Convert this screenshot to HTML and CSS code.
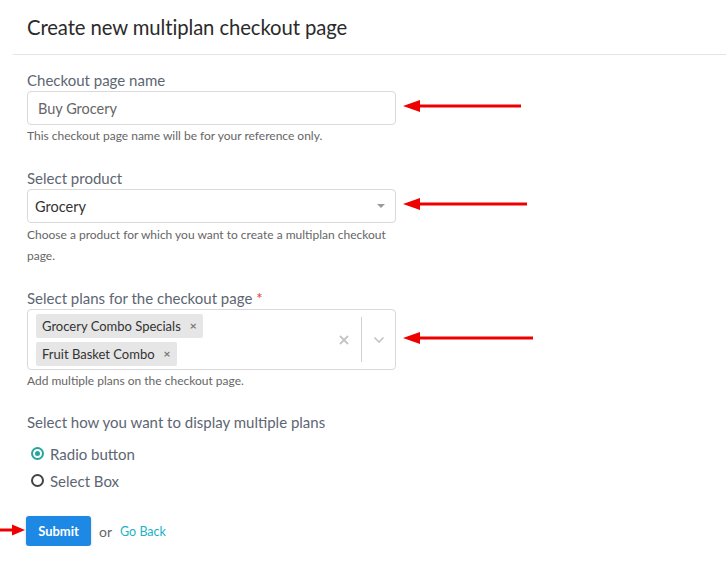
FILE: index.html
```
<!DOCTYPE html>
<html>
<head>
<meta charset="utf-8">
<link rel="stylesheet" href="styles.css">
</head>
<body>
<div class="header"><h1 class="title">Create new multiplan checkout page</h1></div>
<form class="form">
  <div class="field">
    <label class="label">Checkout page name</label>
    <div class="input">Buy Grocery</div>
    <p class="help">This checkout page name will be for your reference only.</p>
    <svg class="arrow a1" width="120" height="14" viewBox="0 0 120 14"><path d="M0 7 L17 1 L17 5.5 L118 5.5 L118 8.5 L17 8.5 L17 13 Z" fill="#ee0000"/></svg>
  </div>
  <div class="field gap-b">
    <label class="label">Select product</label>
    <div class="input select"><span class="val">Grocery</span><span class="caret"></span></div>
    <p class="help tall">Choose a product for which you want to create a multiplan checkout page.</p>
    <svg class="arrow a2" width="126" height="14" viewBox="0 0 126 14"><path d="M0 7 L17 1 L17 5.5 L124 5.5 L124 8.5 L17 8.5 L17 13 Z" fill="#ee0000"/></svg>
  </div>
  <div class="field gap-c">
    <label class="label">Select plans for the checkout page <span class="req">*</span></label>
    <div class="multi">
      <div class="tags">
        <span class="tag">Grocery Combo Specials <span class="tx">×</span></span>
        <span class="tag">Fruit Basket Combo <span class="tx">×</span></span>
      </div>
      <div class="ind clear"><svg width="12" height="12" viewBox="0 0 12 12"><path d="M2 2 L10 10 M10 2 L2 10" stroke="#c4c4c4" stroke-width="1.8"/></svg></div>
      <div class="sep"></div>
      <div class="ind chev"><svg width="12" height="8" viewBox="0 0 12 8"><path d="M1.5 1.5 L6 6 L10.5 1.5" stroke="#c4c4c4" stroke-width="1.6" fill="none"/></svg></div>
    </div>
    <p class="help">Add multiple plans on the checkout page.</p>
    <svg class="arrow a3" width="132" height="14" viewBox="0 0 132 14"><path d="M0 7 L17 1 L17 5.5 L130 5.5 L130 8.5 L17 8.5 L17 13 Z" fill="#ee0000"/></svg>
  </div>
  <div class="field gap-d">
    <label class="label">Select how you want to display multiple plans</label>
    <div class="radios">
      <div class="radio"><span class="dot on"></span>Radio button</div>
      <div class="radio"><span class="dot"></span>Select Box</div>
    </div>
  </div>
  <div class="actions">
    <svg class="arrow a4" width="26" height="12" viewBox="0 0 26 12"><path d="M25 6 L12 0.5 L12 4.5 L0 4.5 L0 7.5 L12 7.5 L12 11.5 Z" fill="#ee0000"/></svg>
    <button type="button" class="btn">Submit</button>
    <span class="or">or</span>
    <a class="back">Go Back</a>
  </div>
</form>
</body>
</html>
```
FILE: styles.css
```
* { box-sizing: border-box; }
body { margin: 0; font-family: Lato, "Open Sans", sans-serif; background: #fff; }
.header { margin-left: 13px; padding: 15px 0 15px 14px; border-bottom: 1px solid #e5e5e5; }
.title { margin: 0; font-size: 20.3px; line-height: 24px; font-weight: 400; color: #2b2b2b; letter-spacing: -0.1px; }
.form { padding: 15px 0 0 27px; display: flex; flex-direction: column; }
.field { position: relative; width: 369px; display: flex; flex-direction: column; }
.gap-b { margin-top: 24px; }
.gap-c { margin-top: 22px; }
.gap-d { margin-top: 23px; }
.label { font-size: 15px; line-height: 20px; color: #5d6672; margin-bottom: 1px; }
.req { color: #e53935; }
.input { height: 34px; border: 1px solid #d9d9d9; border-radius: 4px; padding: 0 10px; display: flex; align-items: center; font-size: 14.5px; color: #666; }
.select { padding: 0 10px 0 7px; justify-content: space-between; }
.select .val { color: #333; }
.caret { width: 0; height: 0; border-left: 4px solid transparent; border-right: 4px solid transparent; border-top: 4px solid #999; }
.help { margin: 2px 0 0; font-size: 12px; line-height: 17px; color: #666; }
.help.tall { line-height: 21px; margin-top: 1px; }
.multi { height: 61px; border: 1px solid #d9d9d9; border-radius: 4px; display: flex; align-items: center; }
.tags { flex: 1; display: flex; flex-direction: column; align-items: flex-start; gap: 4px; padding-left: 8px; }
.tag { height: 24px; background: #e6e6e6; border-radius: 2px; padding: 0 6px; display: inline-flex; align-items: center; font-size: 13px; color: #333; }
.tx { margin-left: 9px; color: #777; font-size: 12px; font-weight: 700; }
.ind { display: flex; align-items: center; justify-content: center; }
.clear { width: 34px; }
.sep { width: 1px; height: 45px; background: #d0d0d0; }
.chev { width: 33px; }
.radios { margin-top: 7px; display: flex; flex-direction: column; }
.radio { height: 27px; display: flex; align-items: center; font-size: 15px; color: #5d6672; padding-left: 4px; }
.dot { width: 13px; height: 13px; border: 2px solid #444; border-radius: 50%; margin-right: 6px; position: relative; }
.dot.on { border-color: #26a69a; }
.dot.on::after { content: ""; position: absolute; left: 2px; top: 2px; width: 5px; height: 5px; border-radius: 50%; background: #26a69a; }
.actions { position: relative; margin-top: 22px; display: flex; align-items: center; }
.btn { margin-left: -1px; width: 65px; height: 30px; border: 0; border-radius: 3px; background: #1e88e5; color: #fff; font-family: Lato, sans-serif; font-weight: 700; font-size: 13px; box-shadow: 0 1px 3px rgba(0,0,0,0.2); padding: 0; }
.or { margin-left: 8px; font-size: 14px; color: #666; }
.back { margin-left: 8px; font-size: 12.5px; color: #1ab3c6; }
.arrow { position: absolute; }
.a1 { left: 376px; top: 29px; }
.a2 { left: 376px; top: 29px; }
.a3 { left: 376px; top: 43px; }
.a4 { left: -27px; top: 8px; }
```
